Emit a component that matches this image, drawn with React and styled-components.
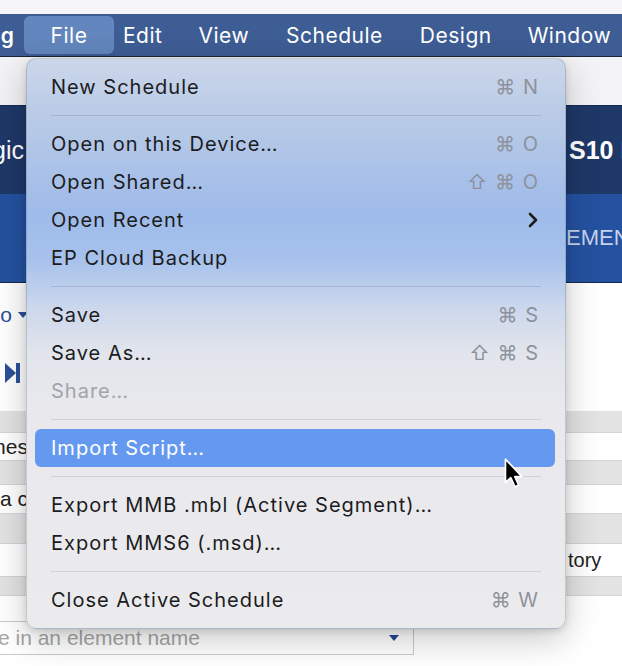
import React from "react";
import styled, { createGlobalStyle } from "styled-components";

const GlobalStyle = createGlobalStyle`
  html, body {
    margin: 0;
    padding: 0;
    background: #ffffff;
  }
  body {
    width: 622px;
    height: 666px;
    overflow: hidden;
    font-family: "Inter", "Liberation Sans", sans-serif;
  }
`;

const TopStrip = styled.div`
  height: 14px;
  background: #f6f6f9;
`;

const MenuBar = styled.nav`
  height: 42px;
  display: flex;
  align-items: center;
  background: #3e5d94;
  border-bottom: 1px solid #1b2438;
`;

const AppName = styled.div`
  width: 24px;
  overflow: hidden;
  display: flex;
  justify-content: flex-end;
  color: #ffffff;
  font-size: 21px;
  font-weight: 600;
  & > span {
    padding-right: 10px;
  }
`;

const BarItem = styled.div`
  height: 38px;
  display: flex;
  align-items: center;
  justify-content: center;
  width: ${(p) => (p.$w ? `${p.$w}px` : "auto")};
  margin-left: ${(p) => p.$ml || 0}px;
  border-radius: 6px;
  color: #ffffff;
  font-size: 21px;
  letter-spacing: 0.5px;
  background: ${(p) => (p.$active ? "#6286bd" : "transparent")};
`;

const Stage = styled.div`
  position: relative;
  height: 609px;
`;

const Backdrop = styled.div`
  display: flex;
  flex-direction: column;
  height: 100%;
  background: #ffffff;
`;

const Blank = styled.div`
  height: ${(p) => p.$h}px;
  background: ${(p) => p.$bg || "#ffffff"};
`;

const Header = styled.header`
  border-top: 1px solid #162a50;
  border-bottom: 1px solid #162a50;
`;

const HeaderBand = styled.div`
  height: ${(p) => p.$h}px;
  background: ${(p) => p.$bg};
  display: flex;
  justify-content: space-between;
  align-items: center;
`;

const EdgeLeft = styled.div`
  width: ${(p) => p.$w || 28}px;
  overflow: hidden;
  display: flex;
  justify-content: flex-end;
  white-space: nowrap;
`;

const EdgeRight = styled.div`
  width: ${(p) => p.$w || 56}px;
  overflow: hidden;
  display: flex;
  justify-content: flex-start;
  white-space: nowrap;
`;

const HeaderText = styled.span`
  font-family: "Liberation Sans", Arial, sans-serif;
  font-size: ${(p) => p.$size || 25}px;
  font-weight: ${(p) => (p.$bold ? 700 : 400)};
  color: ${(p) => p.$color || "#ffffff"};
  padding-left: ${(p) => p.$pl || 0}px;
`;

const Tool = styled.div`
  box-sizing: border-box;
  height: ${(p) => p.$h}px;
  display: flex;
  align-items: center;
  padding-left: ${(p) => p.$pl || 0}px;
  padding-bottom: ${(p) => p.$pb || 0}px;
  background: #ffffff;
`;

const LinkText = styled.span`
  font-family: "Liberation Sans", Arial, sans-serif;
  font-size: 21px;
  color: #2b4f98;
  display: flex;
  align-items: center;
  gap: 6px;
`;

const Caret = styled.span`
  width: 0;
  height: 0;
  border-left: 5px solid transparent;
  border-right: 5px solid transparent;
  border-top: 6px solid ${(p) => p.$color || "#2b4f98"};
`;

const TableRow = styled.div`
  height: ${(p) => p.$h - 1}px;
  display: flex;
  justify-content: space-between;
  align-items: center;
  background: ${(p) => (p.$shade ? "#e3e3e3" : "#ffffff")};
  border-bottom: 1px solid #d4d4d4;
`;

const CellText = styled.span`
  font-family: "Liberation Sans", Arial, sans-serif;
  font-size: ${(p) => p.$size || 21}px;
  color: #222222;
  padding-left: ${(p) => p.$pl || 0}px;
`;

const InputRow = styled.div`
  height: 34px;
  width: 414px;
  border: 1px solid #c9c9c9;
  border-left: none;
  display: flex;
  align-items: center;
  justify-content: space-between;
  padding-right: 14px;
  box-sizing: border-box;
  overflow: hidden;
  background: #ffffff;
`;

const Placeholder = styled.span`
  font-family: "Liberation Sans", Arial, sans-serif;
  font-size: 21px;
  color: #a5a5a5;
  white-space: nowrap;
  margin-left: -2px;
`;

const Dropdown = styled.div`
  position: absolute;
  top: 1px;
  left: 26px;
  width: 540px;
  box-sizing: border-box;
  padding: 9px 10px 9px 8px;
  border-radius: 10px;
  border: 1px solid rgba(80, 90, 110, 0.25);
  background: linear-gradient(
    180deg,
    #cbd6e9 0%,
    #b3c7e7 14%,
    #9fbbea 27%,
    #a6c1ec 35%,
    #cdd8ec 44%,
    #e2e5ec 52%,
    #e9e9ed 62%,
    #ebebee 100%
  );
  box-shadow: 0 10px 34px rgba(0, 0, 0, 0.22), 0 2px 6px rgba(0, 0, 0, 0.12);
`;

const Item = styled.div`
  height: 38px;
  display: flex;
  align-items: center;
  justify-content: space-between;
  padding: 0 16px 0 16px;
  border-radius: 6px;
  font-size: 20px;
  letter-spacing: 1px;
  color: ${(p) => (p.$active ? "#ffffff" : p.$disabled ? "#a2a4aa" : "#1c1c1e")};
  background: ${(p) => (p.$active ? "#6599ef" : "transparent")};
`;

const Shortcut = styled.span`
  color: #8d929c;
  font-size: 20px;
  letter-spacing: 1px;
`;

const Separator = styled.div`
  height: 19px;
  display: flex;
  align-items: center;
  padding: 0 14px 0 16px;
  &::after {
    content: "";
    flex: 1;
    height: 1px;
    background: ${(p) => p.$tone || "rgba(110, 120, 140, 0.28)"};
  }
`;

const Cursor = styled.svg`
  position: absolute;
  left: 503px;
  top: 400px;
  pointer-events: none;
`;

const Chevron = () => (
  <svg width="12" height="18" viewBox="0 0 12 18">
    <path d="M3 3 L9 9 L3 15" fill="none" stroke="#1c1c1e" strokeWidth="2.6" strokeLinecap="round" strokeLinejoin="round" />
  </svg>
);

const SkipIcon = () => (
  <svg width="18" height="22" viewBox="0 0 18 22">
    <path d="M1 1 L12 11 L1 21 Z" fill="#2b4f98" />
    <rect x="12" y="1" width="4" height="20" fill="#2b4f98" />
  </svg>
);

const menu = [
  { label: "New Schedule", key: "⌘ N" },
  { sep: true },
  { label: "Open on this Device…", key: "⌘ O" },
  { label: "Open Shared…", key: "⇧ ⌘ O" },
  { label: "Open Recent", sub: true },
  { label: "EP Cloud Backup" },
  { sep: true },
  { label: "Save", key: "⌘ S" },
  { label: "Save As…", key: "⇧ ⌘ S" },
  { label: "Share…", disabled: true },
  { sep: true, tone: "rgba(120,120,130,0.22)" },
  { label: "Import Script…", active: true },
  { sep: true, tone: "rgba(120,120,130,0.22)" },
  { label: "Export MMB .mbl (Active Segment)…" },
  { label: "Export MMS6 (.msd)…" },
  { sep: true, tone: "rgba(120,120,130,0.22)" },
  { label: "Close Active Schedule", key: "⌘ W" },
];

export default function App() {
  return (
    <>
      <GlobalStyle />
      <TopStrip />
      <MenuBar>
        <AppName>
          <span>Planning</span>
        </AppName>
        <BarItem $active $w={90}>File</BarItem>
        <BarItem $ml={9}>Edit</BarItem>
        <BarItem $ml={36}>View</BarItem>
        <BarItem $ml={37}>Schedule</BarItem>
        <BarItem $ml={37}>Design</BarItem>
        <BarItem $ml={36}>Window</BarItem>
      </MenuBar>
      <Stage>
        <Backdrop>
          <Blank $h={48} $bg="#f3f3f5" />
          <Header>
            <HeaderBand $h={88} $bg="#1e3868">
              <EdgeLeft $w={24}>
                <HeaderText>Magic</HeaderText>
              </EdgeLeft>
              <EdgeRight $w={56}>
                <HeaderText $bold $pl={3}>S10 Pro</HeaderText>
              </EdgeRight>
            </HeaderBand>
            <HeaderBand $h={88} $bg="#2451a0">
              <span />
              <EdgeRight $w={56}>
                <HeaderText $size={22} $color="#c6d3ee">EMENTS</HeaderText>
              </EdgeRight>
            </HeaderBand>
          </Header>
          <Tool $h={63}>
            <EdgeLeft $w={28}>
              <LinkText>
                o <Caret />
              </LinkText>
            </EdgeLeft>
          </Tool>
          <Tool $h={65} $pl={4} $pb={12}>
            <SkipIcon />
          </Tool>
          <TableRow $h={22} $shade />
          <TableRow $h={28}>
            <EdgeLeft $w={28}>
              <CellText>Names</CellText>
            </EdgeLeft>
          </TableRow>
          <TableRow $h={24} $shade />
          <TableRow $h={29}>
            <EdgeLeft $w={28}>
              <CellText>Add a c</CellText>
            </EdgeLeft>
          </TableRow>
          <TableRow $h={30} $shade />
          <TableRow $h={33}>
            <span />
            <EdgeRight $w={56}>
              <CellText $size={20} $pl={2}>tory</CellText>
            </EdgeRight>
          </TableRow>
          <TableRow $h={19} $shade />
          <Blank $h={25} />
          <InputRow>
            <Placeholder>e in an element name</Placeholder>
            <Caret $color="#22468f" />
          </InputRow>
        </Backdrop>

        <Dropdown>
          {menu.map((m, i) =>
            m.sep ? (
              <Separator key={i} $tone={m.tone} />
            ) : (
              <Item key={i} $active={m.active} $disabled={m.disabled}>
                <span>{m.label}</span>
                {m.key && <Shortcut>{m.key}</Shortcut>}
                {m.sub && <Chevron />}
              </Item>
            )
          )}
        </Dropdown>

        <Cursor width="24" height="34" viewBox="0 0 22 32">
          <path
            d="M2 2 L2 24 L7 19.5 L11 28 L14.5 26.5 L10.8 18.5 L17.5 18.5 Z"
            fill="#000000"
            stroke="#ffffff"
            strokeWidth="1.6"
            strokeLinejoin="round"
          />
        </Cursor>
      </Stage>
    </>
  );
}
